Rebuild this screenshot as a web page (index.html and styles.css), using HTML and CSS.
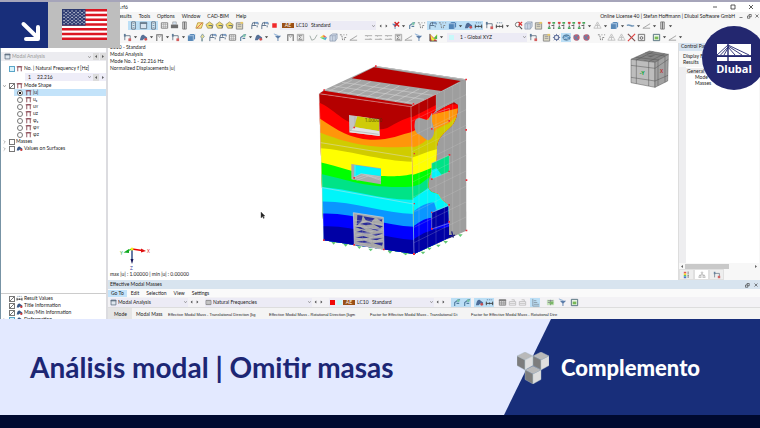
FILE: index.html
```html
<!DOCTYPE html>
<html lang="es">
<head>
<meta charset="utf-8">
<title>Análisis modal | Omitir masas</title>
<link rel="stylesheet" href="styles.css">
</head>
<body>
<svg class="sprite" aria-hidden="true">
  <symbol id="panel" viewBox="0 0 10 10"><path d="M3 1h4v8H3z" fill="#fff" stroke="#456" stroke-width="1"/><path d="M4 3h2M4 5h2M4 7h2" stroke="#58a"/></symbol>
  <symbol id="win" viewBox="0 0 10 10"><path d="M1.500 1.500h7v7h-7z" fill="#dde6ee" stroke="#567"/><path d="M1 2.500h8" stroke="#567" stroke-width="1.500"/></symbol>
  <symbol id="grid" viewBox="0 0 10 10"><path d="M1.500 2h7v6h-7z" fill="#f4f4f4" stroke="#666"/><path d="M2 4h6M2 6h6M4 2v6M6 2v6" stroke="#888" stroke-width=".6"/></symbol>
  <symbol id="print" viewBox="0 0 10 10"><path d="M1 4h8v4H1z" fill="#555"/><path d="M3 1h4v3H3z" fill="#cde" stroke="#777" stroke-width=".6"/></symbol>
  <symbol id="book" viewBox="0 0 10 10"><path d="M3 1h4v8H3z" fill="#ccc" stroke="#555" stroke-width=".8"/><path d="M5 1v8" stroke="#555"/></symbol>
  <symbol id="plane" viewBox="0 0 10 10"><path d="M1 8l2-6h6L7 8z" fill="#f7e47a" stroke="#b88a20"/><path d="M2 8l6-6" stroke="#d33" stroke-width=".9"/></symbol>
  <symbol id="disc" viewBox="0 0 10 10"><path d="M1 4l4-3 4 3-1 4H3z" fill="#efd95a" stroke="#8a7a40" stroke-width=".8"/><path d="M4 5h4v3" fill="none" stroke="#456"/></symbol>
  <symbol id="load" viewBox="0 0 10 10"><path d="M2 9V5h5M2 5l1-3h6v2M5 1v3M8 5v2" fill="none" stroke="#4d6480" stroke-width="1.100"/><path d="M6 1h3v2H6z" fill="#5f8bc0"/></symbol>
  <symbol id="red" viewBox="0 0 10 10"><path d="M2.500 2.500h5v5h-5z" fill="#f00808"/></symbol>
  <symbol id="filterx" viewBox="0 0 10 10"><path d="M1 3h7L5 6v3H4V6z" fill="#4b79ad"/><path d="M4 1l5 5M9 1L4 6" stroke="#c00" stroke-width="1.500"/></symbol>
  <symbol id="filter" viewBox="0 0 10 10"><path d="M2 3h7L6 6v3H5V6z" fill="#41699c"/><path d="M1 1l5 2" stroke="#79a3d0"/></symbol>
  <symbol id="hook" viewBox="0 0 10 10"><path d="M3 9V5l4-3h2M5 6h3" fill="none" stroke="#3e6c92" stroke-width="1.200"/><circle cx="7" cy="3" r="1.500" fill="#6b9"/></symbol>
  <symbol id="xx" viewBox="0 0 10 10"><path d="M1 2h2l1 6M5 2h1M8 2h1M6 8V5h3" fill="none" stroke="#777" stroke-width="1.100" stroke-dasharray="2 1"/></symbol>
  <symbol id="ruler" viewBox="0 0 10 10"><path d="M1 6h8M1.500 4v4M8.500 4v4M5 5v2" stroke="#333" stroke-width="1.100"/><path d="M2 2h6" stroke="#579" stroke-dasharray="1.500 1"/></symbol>
  <symbol id="blob" viewBox="0 0 10 10"><path d="M1 8c1-5 2-6 4-6l4 3v3L6 6 4 8z" fill="#3b5987"/><circle cx="7.500" cy="7" r="1.500" fill="#c33"/></symbol>
  <symbol id="cube" viewBox="0 0 10 10"><path d="M1 3l3-2h5v5L7 9H1z" fill="#c6d2e3" stroke="#7b8ba4" stroke-width=".8"/><path d="M1 3h6v6M7 3l2-2M4 3v6" fill="none" stroke="#7b8ba4" stroke-width=".6"/></symbol>
  <symbol id="bcube" viewBox="0 0 10 10"><path d="M1 3l3-2h5v5L7 9H1z" fill="#3e76ae"/><path d="M1 3h6v6M7 3l2-2" fill="none" stroke="#b9d4ee" stroke-width=".8"/></symbol>
  <symbol id="zoom" viewBox="0 0 10 10"><circle cx="4" cy="4" r="2.500" fill="#fff" stroke="#555"/><path d="M6 6l3 3" stroke="#333" stroke-width="1.300"/><path d="M5 1l4 4M9 1L5 5" stroke="#d11" stroke-width="1.300"/></symbol>
  <symbol id="axis" viewBox="0 0 10 10"><path d="M2.500 2v7M7.500 4v5" stroke="#333" stroke-width="1.200" stroke-dasharray="2 1"/><path d="M1 1h3v2H1z" fill="#d22"/><path d="M1 7h3v2H1zM6 1h3v2H6z" fill="#2a9a40"/><path d="M5 5h2" stroke="#333"/></symbol>
  <symbol id="line" viewBox="0 0 10 10"><path d="M1 5c3-2 5 2 8 0" fill="none" stroke="#5c86ae" stroke-width="1.600"/></symbol>
  <symbol id="dash" viewBox="0 0 10 10"><path d="M1 3h8M1 7h8M3 3l1 1M6 7l1-1" stroke="#999" stroke-width="1"/></symbol>
  <symbol id="slope" viewBox="0 0 10 10"><path d="M1 8l8-5M1 8h8" stroke="#999" stroke-width="1.100"/></symbol>
  <symbol id="vee" viewBox="0 0 10 10"><path d="M1 3l2 5 3-1 3-5" fill="none" stroke="#9aa6a0" stroke-width="1.100"/></symbol>
  <symbol id="frame" viewBox="0 0 10 10"><path d="M2.500 9V2.500h5V9M1 2.500h8" fill="none" stroke="#833b48" stroke-width="1.200"/></symbol>
  <symbol id="gframe" viewBox="0 0 10 10"><path d="M2 9V2h6v7" fill="none" stroke="#555" stroke-width="1.200"/><path d="M3 2l2 3 2-3" fill="none" stroke="#999"/></symbol>
  <symbol id="sum" viewBox="0 0 10 10"><path d="M1.500 1.500h7v7h-7z" fill="#e6e6e6" stroke="#999"/><path d="M7 3H3l2 2-2 2h4" fill="none" stroke="#555" stroke-width=".8"/></symbol>
  <symbol id="rain" viewBox="0 0 10 10"><path d="M1 5l4-3 1 3z" fill="#f5d020"/><path d="M5 2l4 3H5z" fill="#e43"/><path d="M1 5h4l2 3z" fill="#3c6"/><path d="M5 5h4L7 8z" fill="#29d"/></symbol>
  <symbol id="iso" viewBox="0 0 10 10"><path d="M1 1v8h8z" fill="#d22"/><path d="M1 1l4 5 4-5v2L5 9H3z" fill="#ee2"/><path d="M5 6l4-4v5z" fill="#3a3"/><path d="M1 1v8h8" fill="none" stroke="#333"/></symbol>
  <symbol id="arrows" viewBox="0 0 10 10"><path d="M2 8V3h6v5" fill="none" stroke="#567" stroke-width="1"/><path d="M6 6h3v3H6z" fill="#c44"/><path d="M1 1h2v3H1z" fill="#468"/></symbol>
  <symbol id="bulb" viewBox="0 0 10 10"><path d="M4 6v3h1V6l2-2-2-3-2 3z" fill="#e7d884" stroke="#689" stroke-width=".9"/></symbol>
  <symbol id="gear" viewBox="0 0 10 10"><circle cx="5" cy="5" r="2.500" fill="#e5e8f2" stroke="#4d5f90" stroke-width="1.300"/><path d="M5 1v2M5 7v2M1 5h2M7 5h2M2 2l1 1M8 2L7 3M2 8l1-1M8 8L7 7" stroke="#4d5f90"/></symbol>
  <symbol id="note" viewBox="0 0 10 10"><path d="M1.500 2h7v7h-7z" fill="#d8d3bb" stroke="#777"/><path d="M3 4h4M3 6h4" stroke="#888"/><path d="M6 1h3v2H6z" fill="#e6c050"/></symbol>
  <symbol id="ball" viewBox="0 0 10 10"><ellipse cx="5" cy="5" rx="4" ry="3" fill="#5390bf" stroke="#34546f" stroke-width=".8"/><path d="M1 7l8-4M2 4l6 4" stroke="#d0e2f0" stroke-width=".7"/></symbol>
  <symbol id="rball" viewBox="0 0 10 10"><circle cx="5" cy="5" r="3.500" fill="#b84458"/><path d="M2 3l5 5M7 2L3 7" stroke="#456ea0" stroke-width="1.300"/></symbol>
  <symbol id="ghost" viewBox="0 0 10 10"><path d="M5 1L1 8h8zM3 5h4M5 3v5" fill="none" stroke="#b8b8b8" stroke-width="1"/></symbol>
  <symbol id="cross" viewBox="0 0 10 10"><path d="M1 1l8 8" stroke="#633" stroke-width="1.300"/><path d="M9 1L1 9" stroke="#d22" stroke-width="1.300"/></symbol>
  <symbol id="cam" viewBox="0 0 10 10"><path d="M1.500 1.500h7v7h-7z" fill="#eee" stroke="#555"/><circle cx="5" cy="5.500" r="1.500" fill="none" stroke="#444"/></symbol>
  <symbol id="gwin" viewBox="0 0 10 10"><path d="M1.500 1.500h7v7h-7z" fill="#e8f5e0" stroke="#356"/><path d="M3 4h4v3H3z" fill="#62b03c"/></symbol>
  <symbol id="report" viewBox="0 0 10 10"><path d="M1 2h8v6H1z" fill="#bfe0b2"/><path d="M2 3h6M2 5h6M5 2v6" stroke="#667" stroke-width=".8"/><path d="M4 4h4v3H4z" fill="#67ab50"/></symbol>
  <symbol id="table" viewBox="0 0 10 10"><path d="M1.500 2h7v6h-7z" fill="#ccc" stroke="#777"/><path d="M1 2.500h8" stroke="#666" stroke-width="1.500"/><path d="M1 5.500h8M4 3v5M6.500 3v5" stroke="#777" stroke-width=".7"/></symbol>
  <symbol id="gtable" viewBox="0 0 10 10"><path d="M1.500 4h7v4h-7zM4 2h3v2" fill="none" stroke="#b8b8b8"/><path d="M2 6h6" stroke="#bbb"/></symbol>
  <symbol id="bars" viewBox="0 0 10 10"><path d="M2 1v8h7M3 3h3M3 5h4M3 7h6" fill="none" stroke="#82919d" stroke-width="1"/></symbol>
  <symbol id="scale" viewBox="0 0 10 10"><path d="M1 1h3v2H1z" fill="#d33"/><path d="M1 3h3v2H1z" fill="#fc0"/><path d="M1 5h3v2H1z" fill="#3b5"/><path d="M1 7h3v2H1z" fill="#25c"/><path d="M6.500 1v8" stroke="#555" stroke-dasharray="1 1" stroke-width="2"/></symbol>
  <symbol id="bal" viewBox="0 0 10 10"><path d="M5 2v3M2 5h6M2 5L1 8h3L3 5M7 5L6 8h3L8 5" fill="none" stroke="#888" stroke-width=".8"/><circle cx="5" cy="2" r="1" fill="none" stroke="#888" stroke-width=".6"/></symbol>
  <symbol id="caret" viewBox="0 0 6 10"><path d="M1 4h4L3 6.500z" fill="#222"/></symbol>
  <symbol id="left" viewBox="0 0 6 10"><path d="M4 3v4L2 5z" fill="#222"/></symbol>
  <symbol id="right" viewBox="0 0 6 10"><path d="M2 3v4l2-2z" fill="#222"/></symbol>
  <symbol id="chev" viewBox="0 0 6 10"><path d="M1.500 4L3 6l1.500-2" fill="none" stroke="#777" stroke-width=".8"/></symbol>
  <symbol id="chevr" viewBox="0 0 6 10"><path d="M2 3l2 2-2 2" fill="none" stroke="#888" stroke-width=".8"/></symbol>
</svg>

<main class="app">
  <header class="chrome">
    <div class="titlebar"><span class="file">is.rf6</span>
      <div class="winctl">
        <button aria-label="Minimize"><svg viewBox="0 0 8 8"><path d="M2 4h4"/></svg></button>
        <button aria-label="Maximize"><svg viewBox="0 0 8 8"><path d="M2 2h4v4H2z"/></svg></button>
        <button aria-label="Close"><svg viewBox="0 0 8 8"><path d="M2 2l4 4M6 2L2 6"/></svg></button>
      </div>
    </div>
    <nav class="menubar">
      <button>Results</button><button>Tools</button><button>Options</button><button>Window</button><button>CAD-BIM</button><button>Help</button>
      <span class="license">Online License 40 | Stefan Hoffmann | Dlubal Software GmbH</span>
      <div class="subctl">
        <button aria-label="Minimize view"><svg viewBox="0 0 8 8"><path d="M2 6h4"/></svg></button>
        <button aria-label="Restore view"><svg viewBox="0 0 8 8"><path d="M2 4h3v3H2zM4 4V2h3v3H5"/></svg></button>
        <button aria-label="Close view"><svg viewBox="0 0 8 8"><path d="M2 2l4 4M6 2L2 6"/></svg></button>
      </div>
    </nav>
    <div class="toolbar first">
      <div class="group" data-icons="panel* win* panel*"></div>
      <div class="group" data-icons="grid print book"></div>
      <div class="group wider" data-icons="plane disc disc disc note"></div>
      <div class="group wider" data-icons="load load red"></div>
      <div class="combo case"><span class="tag">AE</span><label class="num" for="lc">LC10</label><select id="lc"><option>Standard</option></select><svg><use href="#chev"/></svg></div>
      <div class="group" data-icons="left right"></div>
      <div class="group" data-icons="filterx caret hook xx"></div>
      <div class="group" data-icons="load* xx* bcube* caret* blob* ruler*"></div>
      <div class="group" data-icons="arrows ruler caret"></div>
      <div class="group wide" data-icons="zoom cube note"></div>
      <div class="group wide" data-icons="axis axis axis axis caret ghost caret"></div>
      <div class="group" data-icons="bcube caret line caret slope caret book caret"></div>
    </div>
    <div class="toolbar second">
      <div class="group" data-icons="arrows caret blob caret gframe caret arrows caret bcube"></div>
      <div class="group" data-icons="bulb load load grid hook caret blob caret"></div>
      <div class="group wide" data-icons="filter"></div>
      <div class="group wide" data-icons="gframe sum"></div>
      <div class="group wide" data-icons="vee rain cube xx slope"></div>
      <div class="group wider" data-icons="dash dash dash sum slope filter"></div>
      <div class="group wider" data-icons="iso caret"></div>
      <div class="combo system"><span class="swatch"></span><select aria-label="Coordinate system"><option>1 - Global XYZ</option></select><svg><use href="#chev"/></svg></div>
      <div class="group" data-icons="arrows"></div>
      <div class="group wide" data-icons="note gear ball* rball rball"></div>
      <div class="group wider" data-icons="xx ghost ghost cross cam"></div>
      <div class="group wider" data-icons="gwin caret slope caret"></div>
    </div>
  </header>

  <div class="workspace">
    <aside class="navigator">
      <div class="navhead"><svg class="ic"><use href="#win"/></svg><select aria-label="Analysis type"><option>Modal Analysis</option></select><svg class="sm"><use href="#chev"/></svg><button aria-label="Previous"><svg><use href="#left"/></svg></button><button aria-label="Next"><svg><use href="#right"/></svg></button></div>
      <div class="tree">
        <label class="row"><i></i><input class="cyan" type="checkbox"><svg class="ic"><use href="#frame"/></svg>No. | Natural Frequency f [Hz]</label>
        <div class="row freq"><span>1</span><select aria-label="Frequency"><option>22.216</option></select><svg class="sm"><use href="#chev"/></svg><button aria-label="Previous mode"><svg><use href="#left"/></svg></button><button aria-label="Next mode"><svg><use href="#right"/></svg></button></div>
        <label class="row"><i><svg class="sm"><use href="#chev"/></svg></i><input type="checkbox" checked><svg class="ic"><use href="#frame"/></svg>Mode Shape</label>
        <label class="row leaf on"><input type="radio" name="shape" checked><svg class="ic"><use href="#frame"/></svg>|u|</label>
        <label class="row leaf"><input type="radio" name="shape"><svg class="ic"><use href="#frame"/></svg>uₓ</label>
        <label class="row leaf"><input type="radio" name="shape"><svg class="ic"><use href="#frame"/></svg>uʏ</label>
        <label class="row leaf"><input type="radio" name="shape"><svg class="ic"><use href="#frame"/></svg>uᴢ</label>
        <label class="row leaf"><input type="radio" name="shape"><svg class="ic"><use href="#frame"/></svg>φₓ</label>
        <label class="row leaf"><input type="radio" name="shape"><svg class="ic"><use href="#frame"/></svg>φʏ</label>
        <label class="row leaf"><input type="radio" name="shape"><svg class="ic"><use href="#frame"/></svg>φᴢ</label>
        <label class="row"><i><svg class="sm"><use href="#chevr"/></svg></i><input type="checkbox">Masses</label>
        <label class="row"><i><svg class="sm"><use href="#chevr"/></svg></i><input type="checkbox"><svg class="ic"><use href="#blob"/></svg>Values on Surfaces</label>
      </div>
      <div class="tree lower">
        <label class="row"><i></i><input type="checkbox" checked><svg class="ic"><use href="#ruler"/></svg>Result Values</label>
        <label class="row"><i></i><input type="checkbox" checked><svg class="ic"><use href="#blob"/></svg>Title Information</label>
        <label class="row"><i></i><input type="checkbox" checked><svg class="ic"><use href="#blob"/></svg>Max/Min Information</label>
        <label class="row"><i><svg class="sm"><use href="#chevr"/></svg></i><input class="cyan" type="checkbox"><svg class="ic"><use href="#blob"/></svg>Deformation</label>
      </div>
    </aside>

    <section class="center">
      <div class="upper">
        <div class="viewport">
          <svg class="scene" viewBox="108 43 570 237" role="img" aria-label="Building model">
            <defs>
              <clipPath id="front"><path d="M57 116L333 155L342 597L71 556Z"/></clipPath>
              <clipPath id="side"><path d="M332 155L408 118V165L398 178L430 158L462 142L474 150C474 190 460 210 445 222C425 240 412 255 411 275L408 330C400 345 382 360 385 400C395 420 415 410 420 425C430 445 445 440 447 458V540L465 540L342 597Z"/></clipPath>
              <clipPath id="whole"><path d="M332 155L498 73L499 527L342 597Z"/></clipPath>
            </defs>
            <g transform="translate(300 55) scale(.33333)">
              <path d="M57 116L72 105L226 33L498 73L335 155Z" fill="#a5a5a5"/>
              <path d="M226 33L498 73L484 84L222 41Z" fill="#9a9a9a"/>
              <path d="M76 103L345 146M100 93L372 133M126 82L398 121M85 109L155 76M113 114L183 76M141 118L212 80M170 123L241 85M198 127L270 89M227 132L298 93M256 136L328 98M284 141L357 102M312 146L386 106" fill="none" stroke="#d9d9d9" stroke-width="1.500"/>
              <path d="M155 70L222 37L482 78L424 108Z" fill="#b40000"/>
              <path d="M226 34L498 74" stroke="#ccc" stroke-width="2"/>
              <path d="M332 155L498 73L499 527L342 597Z" fill="#9e9e9e"/>
              <g clip-path="url(#side)">
                <path d="M330 110H480V600H330Z" fill="#b40000"/>
                <path d="M330 190L408 150L474 148V600H330Z" fill="#f00"/>
                <path d="M330 232C360 225 380 190 400 178L474 160V600H330Z" fill="#ff960a"/>
                <path d="M330 278C370 275 400 235 410 222L447 205L474 180V600H330Z" fill="#d0cc00"/>
                <path d="M330 310C360 300 390 285 430 278V600H330Z" fill="#ff0"/>
                <path d="M330 362C355 355 380 345 410 332V600H330Z" fill="#0f0"/>
                <path d="M330 397L360 388L390 365L410 360V600H330Z" fill="#00e387"/>
                <path d="M330 435C350 425 370 410 395 390L450 390V600H330Z" fill="#00f5fa"/>
                <path d="M330 480C350 460 370 445 402 442L410 465L450 480V600H330Z" fill="#0a96ff"/>
                <path d="M330 520C355 505 370 488 400 488L450 490V600H330Z" fill="#00f"/>
                <path d="M330 560C355 545 370 525 450 515L470 520V600H330Z" fill="#0000a5"/>
              </g>
              <path d="M345 198C355 180 370 195 385 195L396 172V200C408 230 402 250 385 256C370 250 368 242 352 236C340 222 344 208 345 198Z" fill="#9e9e9e"/>
              <path d="M395 325L448 300V350L395 372Z" fill="#00e387"/><path d="M395 345L410 340L425 360L395 372Z" fill="#00f5fa"/>
              <path d="M395 473L445 453L447 500L395 522Z" fill="#0000a5"/>
              <path d="M395 178L448 160V198L395 222ZM395 325L448 300V350L395 372ZM395 473L447 450V505L395 522Z" fill="none" stroke="#c5c5c5" stroke-width="1.500"/>
              <g clip-path="url(#whole)" fill="none" stroke="#ddd" stroke-opacity=".45" stroke-width="1.300">
                <path d="M357 110V610M383 110V610M408 110V610M433 80V610M458 80V610M480 70V610"/>
                <path d="M330 201L500 118M330 247L500 163M330 293L500 210M330 339L500 255M330 385L500 300M330 431L500 347M330 477L500 393M330 523L500 440M330 569L500 485"/>
              </g>
              <g clip-path="url(#front)">
                <path d="M50 100H350V600H50Z" fill="#b40000"/>
                <path d="M50 140C95 155 130 205 185 215C220 224 245 226 262 219C290 204 305 193 345 182V600H50Z" fill="#f00"/>
                <path d="M50 184C110 225 150 250 210 254C260 258 300 240 345 228V600H50Z" fill="#ff960a"/>
                <path d="M50 229C120 255 200 286 345 274V600H50Z" fill="#d0cc00"/>
                <path d="M50 280C130 280 250 322 345 320V600H50Z" fill="#ff0"/>
                <path d="M50 320C110 331 180 362 240 363S310 365 345 355V600H50Z" fill="#0f0"/>
                <path d="M50 355C130 368 200 405 345 394V600H50Z" fill="#00e387"/>
                <path d="M50 395C150 400 250 438 345 434V600H50Z" fill="#00f5fa"/>
                <path d="M50 440C150 434 250 475 345 477V600H50Z" fill="#0a96ff"/>
                <path d="M50 477C150 467 250 514 345 515V600H50Z" fill="#00f"/>
                <path d="M50 516C150 504 250 553 345 555V600H50Z" fill="#0000a5"/>
              </g>
              <path d="M57 116L72 107L338 149L333 157Z" fill="#c00000"/>
              <path d="M57 116L333 155L342 597M57 116L71 556M62 263L335 307M67 398L340 447M333 155L408 118" fill="none" stroke="#dedede" stroke-opacity=".7" stroke-width="2"/>
              <path d="M147 180L238 193L239 243L148 232Z" fill="#c4c4c4"/><path d="M172 184L237 194V228L162 216Z" fill="#cfcb08"/><path d="M148 232L163 216L238 229L239 243Z" fill="#e3e3e3"/><path d="M165 184V218M148 226L236 238" stroke="#aaa" stroke-width="2"/>
              <text x="194" y="201" font-size="14" fill="#443c00">1.00000</text>
              <path d="M154 327L243 340V388L154 373Z" fill="#aaa"/><path d="M163 330L243 342V363L184 356L162 367Z" fill="#00f5fa"/><path d="M156 370L183 356L242 366M158 373L195 360L242 371M170 376L205 363L243 376M165 330V367" stroke="#d2d2d2" stroke-width="1.500" fill="none"/>
              <path d="M160 473L250 487L252 584L163 568Z" fill="#a8a8a8"/>
              <path d="M172 480L188 482L184 500L170 512ZM190 484L224 490L214 501L197 495ZM232 491L247 492L245 500ZM180 507L205 500L218 508L198 511ZM220 508L249 514L240 519ZM166 516L181 516L197 524L180 521ZM203 518L221 522L246 521L230 528ZM168 531L185 526L213 535L195 536ZM214 538L249 535L229 543ZM165 548L190 543L209 549L185 550ZM211 552L247 549L230 556ZM169 560L193 557L214 565L195 564ZM220 565L249 562L246 572Z" fill="#151696" opacity=".85"/>
              <path d="M163 495L250 510M164 511L250 526M164 530L251 544M164 548L251 562M166 506L247 492M166 541L249 521M169 557L249 540M180 567L250 553" stroke="#c4c4c4" stroke-width="1.500"/>
              <path d="M222 490V535L215 575M204 493V570M188 505V565" stroke="#999" fill="none" stroke-width="1"/>
              <path d="M160 473L250 487L252 584L163 568Z" fill="none" stroke="#d3d3d3" stroke-width="2"/>
              <g fill="#62c872"><path d="M94 561h14l-7 8zM130 567h14l-7 8zM171 574h14l-7 8zM205 581h14l-7 8zM263 588h14l-7 8zM308 594h17l-8 7zM362 590h14l-7 8zM381 578h14l-7 8zM408 569h14l-7 8zM430 558h14l-7 8zM474 538h14l-7 8z"/></g>
              <path d="M465 540L447 548M455 529L460 548" stroke="#202080" stroke-width="4"/>
              <g fill="#f02c38"><path d="M70 103h5v5h-5zM225 31h5v5h-5zM496 71h5v5h-5zM338 144h5v5h-5zM496 222h5v5h-5zM497 373h5v5h-5zM497 524h5v5h-5zM339 594h6v6h-6zM69 553h5v5h-5zM160 215h5v5h-5zM160 366h5v5h-5zM160 567h5v5h-5zM249 581h5v5h-5zM341 294h4v4h-4zM341 444h4v4h-4zM393 219h5v5h-5zM445 195h5v5h-5zM446 297h5v5h-5zM445 347h4v4h-4zM393 370h5v5h-5zM445 447h5v5h-5zM445 498h5v5h-5zM393 519h5v5h-5zM393 470h4v4h-4z"/></g>
            </g>
            <g stroke-width="1.300">
              <path d="M132 249L142 250.500" stroke="#e00"/><path d="M141 248.500L146 251L141 252.500Z" fill="#d11"/>
              <path d="M132 249L127 251" stroke="#1b1"/><path d="M129 249L123.500 252.500L129 253Z" fill="#1a2"/>
              <path d="M132 249V260" stroke="#137"/><path d="M130.500 259H133.500L132 264Z" fill="#115"/>
              <circle cx="132" cy="249" r="1.500" fill="#ee2"/>
              <text x="147" y="253" font-size="5" fill="#d11">X</text><text x="120" y="255" font-size="5" fill="#1a2">Y</text><text x="130" y="270" font-size="5" fill="#339">Z</text>
            </g>
            <path d="M261 212v6l1.500-1.500 1 2 .8-.4-.9-2h1.600z" fill="#222" stroke="#555" stroke-width=".4"/>
            <g transform="translate(600 0) scale(.33333)" stroke="#555" stroke-width="1.500">
              <path d="M93 178L148 153L205 163L165 187Z" fill="#858585"/><path d="M93 178L165 187V262L93 248Z" fill="#bdbdbd"/><path d="M165 187L205 163L203 243L165 262Z" fill="#a2a2a2"/>
              <path d="M109 180V251M146 185V258M93 196L165 205L205 178M93 232L165 243L204 226M174 182V257M195 169V247M107 172L177 180M136 158L195 168M109 180L160 155M146 185L194 161" fill="none"/>
              <path d="M140 167L166 166L152 172Z" fill="#666" stroke="none"/>
              <text x="119" y="225" font-size="16" font-weight="bold" fill="#12a83c" stroke="none">-Y</text><text x="180" y="220" font-size="14" font-weight="bold" fill="#b33" stroke="none">X</text>
            </g>
          </svg>
          <div class="info">2010 - Standard<br>Modal Analysis<br>Mode No. 1 - 22.216 Hz<br>Normalized Displacements |u|</div>
          <div class="range">max |u| : 1.00000 | min |u| : 0.00000</div>
        </div>
        <aside class="control">
          <h2>Control Panel</h2>
          <p>Display Factors<br>Results</p>
          <ul class="factors"><li class="head">General</li><li>Mode</li><li>Masses</li></ul>
          <div class="scroll"><svg><use href="#left"/></svg><span></span><svg><use href="#right"/></svg></div>
          <div class="tabs"><button aria-label="Colors"><svg><use href="#scale"/></svg></button><button class="on" aria-label="Factors"><svg><use href="#bal"/></svg></button><button aria-label="Filter"><svg><use href="#arrows"/></svg></button></div>
        </aside>
      </div>
      <section class="masses">
        <div class="mtitle"><h2>Effective Modal Masses</h2>
          <button aria-label="Restore"><svg viewBox="0 0 8 8"><path d="M2 4h3v3H2zM4 4V2h3v3H5"/></svg></button><button aria-label="Close panel"><svg viewBox="0 0 8 8"><path d="M2 2l4 4M6 2L2 6"/></svg></button></div>
        <nav class="mmenu"><button class="on">Go To</button><button>Edit</button><button>Selection</button><button>View</button><button>Settings</button></nav>
        <div class="mtools">
          <div class="combo kind"><svg class="ic"><use href="#win"/></svg><select aria-label="Table kind"><option>Modal Analysis</option></select><svg><use href="#chev"/></svg></div>
          <div class="group" data-icons="left right"></div>
          <div class="combo result"><svg class="ic"><use href="#grid"/></svg><select aria-label="Table result"><option>Natural Frequencies</option></select><svg><use href="#chev"/></svg></div>
          <div class="group" data-icons="left right"></div>
          <div class="combo mcase"><span class="swatch redsw"></span><span class="swatch"></span><span class="tag">AE</span><label class="num" for="lc2">LC10</label><select id="lc2"><option>Standard</option></select><svg><use href="#chev"/></svg></div>
          <div class="group" data-icons="left right"></div>
          <div class="group wider" data-icons="hook* hook*"></div>
          <div class="group wide" data-icons="blob* ruler*"></div>
          <div class="group wide" data-icons="table gtable gtable"></div>
          <div class="group wide" data-icons="bars*"></div>
          <div class="group spread" data-icons="report filter gwin"></div>
        </div>
        <table><thead><tr><th class="c1">Mode</th><th class="c2">Modal Mass</th><th>Effective Modal Mass - Translational Direction [kg</th><th>Effective Modal Mass - Rotational Direction [kgm</th><th>Factor for Effective Modal Mass - Translational Di</th><th>Factor for Effective Modal Mass - Rotational Dire</th><th class="rest"></th></tr></thead></table>
      </section>
    </section>
  </div>

  <div class="badges">
    <div class="arrow"><svg viewBox="0 0 48 48"><path d="M23.500 24L38 38M38 27V39H26"/></svg></div>
    <div class="flagbox"><svg class="flag" viewBox="0 0 45 31"><path d="M0 0H45V31H0Z" fill="#fff"/><path d="M0 1.200H45M0 6H45M0 10.700H45M0 15.500H45M0 20.300H45M0 25H45M0 29.800H45" stroke="#dc1622" stroke-width="2.400"/><path d="M0 0H23.500V16.700H0Z" fill="#2d3a70"/><path d="M1.500 2H23M1.500 5.200H23M1.500 8.400H23M1.500 11.600H23M1.500 14.800H23M3.500 3.600H21M3.500 6.800H21M3.500 10H21M3.500 13.200H21" stroke="#fff" stroke-width="1.100" stroke-dasharray="1.100 2.900"/></svg></div>
  </div>
  <div class="dlubal">
    <svg viewBox="0 0 34 17"><path d="M0 0H34V11.500H0Z" fill="#fff"/><path d="M0 11L11 1M3.500 11L11 3M7 11L11 4M11 1L32 11M11 2L25 11M11 3L18 11" stroke="#23276f" stroke-width=".9" fill="none"/><path d="M0 13H34V17H0Z" fill="#fff"/><path d="M0 11.300H34V12.800H0ZM10.300 0H11.700V17H10.300Z" fill="#23276f"/></svg>
    <strong>Dlubal</strong>
  </div>
</main>

<section class="banner">
  <h1>Análisis modal | Omitir masas</h1>
  <div class="addon"><span>Complemento</span></div>
  <svg class="cubes" viewBox="0 0 32 32"><g id="c" stroke="#a9bcc4" stroke-width=".4"><path d="M0 4L8 0L16 4L8 8Z" fill="#b9b9b9"/><path d="M0 4L8 8V18L0 13.500Z" fill="#7d7d7d"/><path d="M16 4L8 8V18L16 13.500Z" fill="#dedede"/></g><use href="#c" x="16"/><use href="#c" x="8" y="14"/></svg>
</section>
<footer class="base"></footer>
<script src="toolbar.js"></script>
</body>
</html>
```

FILE: styles.css
```css
* { box-sizing: border-box; }
body { margin: 0; height: 100vh; display: grid; grid-template-rows: minmax(0, 1fr) 96px 13px; font-family: Lato, sans-serif; background: #000a30; overflow: hidden; }
button, select, input { font: inherit; color: inherit; margin: 0; padding: 0; border: 0; background: none; border-radius: 0; }
select { appearance: none; flex: 1; min-width: 0; }
h1, h2, p, ul { margin: 0; padding: 0; font-weight: inherit; font-size: inherit; }
ul { list-style: none; }
svg { display: block; flex: none; }
.sprite { position: absolute; width: 0; height: 0; }
.app { position: relative; display: flex; flex-direction: column; overflow: hidden; background: #fff; font-size: 5px; line-height: 7px; color: #222; border-top: 2px solid #a6a5ba; }

.titlebar { height: 10px; display: flex; align-items: center; padding-left: 117px; }
.winctl { margin-left: auto; display: flex; gap: 10px; padding-right: 5px; }
.winctl svg { width: 8px; height: 8px; }
.winctl path, .subctl path, .mtitle path { fill: none; stroke: #333; stroke-width: 0.8; }
.menubar { height: 8px; display: flex; align-items: center; gap: 7px; padding-left: 116px; background: #f5f5f5; }
.license { margin-left: auto; }
.subctl { display: flex; gap: 2px; margin-left: -4px; }
.subctl svg, .mtitle svg { width: 6px; height: 6px; }
.toolbar { display: flex; align-items: center; background: #f7f7f7; }
.first { height: 11px; padding-left: 128px; }
.second { height: 12px; padding-left: 122px; }
.group { display: flex; margin-right: 1px; }
.group.wide { margin-left: 2px; }
.group.wider { margin-left: 4px; }
.group.spread { margin-left: 4px; gap: 2px; }
.group button { width: 10px; height: 9px; display: flex; align-items: center; justify-content: center; }
.group button.thin { width: 6px; }
.group button.on { background: #bcdff6; }
.group svg { width: 9px; height: 9px; opacity: 0.85; }
.group .thin svg { width: 5px; height: 8px; }
.combo { display: flex; align-items: center; height: 9px; background: #ecebf5; }
.combo svg, .sm { width: 5px; height: 8px; }
.combo .ic, .ic { width: 7px; height: 7px; margin-right: 1px; }
.case { width: 96px; margin-right: 1px; padding-left: 2px; }
.tag { background: #9a4f16; color: #fff; width: 12px; height: 5px; line-height: 5px; text-align: center; margin-right: 2px; }
.num { width: 15px; }
.system { width: 80px; margin: 0 1px 0 2px; }
.swatch { width: 5px; height: 5px; background: #c9f8fa; margin: 0 1px; }
.system .swatch { margin: 0 6px 0 2px; }

.workspace { flex: 1; min-height: 0; display: flex; }
.navigator { width: 108px; border-left: 1px solid #7793a5; border-right: 2px solid #dcdce0; padding-top: 9px; display: flex; flex-direction: column; }
.navhead { display: flex; align-items: center; height: 9px; padding-left: 3px; background: #ececf0; color: #999; margin-bottom: 4px; }
.navhead button, .freq button { width: 6px; height: 7px; background: #dcdcdc; margin-left: 1px; }
.navhead button svg, .freq button svg { width: 6px; height: 7px; }
.row { display: flex; align-items: center; height: 7px; white-space: nowrap; }
.row i { width: 8px; padding-left: 1px; }
.row input { appearance: none; width: 6px; height: 6px; border: 1px solid #777; background: #fff; margin-right: 1px; }
.row input[type=checkbox]:checked { background: linear-gradient(135deg, #fff 45%, #777 45% 60%, #fff 60%); }
.row input.cyan { border-color: #5aa5c8; background: #d9f2fb; }
.row input[type=radio] { border-radius: 50%; }
.row input[type=radio]:checked { background: radial-gradient(#111 40%, #fff 50%); }
.leaf { margin-left: 13px; padding-left: 3px; }
.leaf input { margin-right: 2px; }
.leaf.on { background: #c3e3fa; }
.freq { height: 8px; margin: 0 0 1px 24px; padding-left: 3px; background: #eeedf8; }
.freq span { width: 9px; }
.freq button:last-child { background: none; }
.tree > .row:first-child { margin-bottom: 1px; }
.lower { margin-top: auto; height: 26px; border-top: 1px solid #ccc; overflow: hidden; padding-top: 1px; }
.lower > .row:first-child { margin-bottom: 0; }

.center { flex: 1; min-width: 0; display: flex; flex-direction: column; }
.upper { flex: 1; min-height: 0; display: flex; }
.viewport { flex: 1; position: relative; display: flex; flex-direction: column; justify-content: space-between; padding: 1px 2px 2px; }
.scene { position: absolute; inset: 0; width: 100%; height: 100%; font-family: "Open Sans", sans-serif; }
.info, .range { position: relative; }
.control { width: 82px; display: flex; flex-direction: column; background: #f7f7f7; border-left: 1px solid #ddd; padding-right: 1px; }
.control h2 { height: 8px; background: #d6e3f0; padding-left: 2px; }
.control p { padding: 2px 4px; line-height: 6px; }
.factors { flex: 1; background: #fff; border-left: 7px solid #eeeef0; padding-top: 1px; }
.factors li { padding-left: 9px; line-height: 6px; }
.factors .head { padding-left: 1px; background: #eee; }
.scroll { display: flex; height: 6px; align-items: center; }
.scroll span { width: 44px; height: 5px; background: #c9c9c9; }
.scroll svg { width: 6px; height: 7px; }
.scroll svg:last-child { margin-left: auto; }
.tabs { display: flex; height: 11px; }
.tabs button { width: 15px; display: flex; align-items: center; justify-content: center; background: #eee; border: 1px solid #e0e0e0; }
.tabs .on { background: #fff; }
.tabs svg { width: 8px; height: 8px; opacity: 0.8; }

.masses { height: 39px; background: #f4f4f4; }
.mtitle { display: flex; align-items: center; height: 9px; gap: 3px; padding: 0 1px 0 2px; background: #d8e4ef; }
.mtitle h2 { flex: 1; }
.mmenu { display: flex; height: 8px; align-items: center; gap: 7px; background: #fafafa; }
.mmenu .on { background: #c3e3fa; padding: 0 3px; margin-right: -3px; }
.mtools { display: flex; align-items: center; height: 10px; padding-left: 2px; background: #f3f2f5; }
.kind { width: 78px; }
.result { width: 107px; margin-left: 4px; }
.mcase { width: 105px; margin-left: 4px; }
.redsw { background: #f00808; }
table { width: 100%; table-layout: fixed; border-collapse: collapse; }
th { font: 400 4px/7px "Liberation Sans", sans-serif; width: 101px; padding: 3px 0 2px; text-align: left; white-space: nowrap; border-top: 1px solid #ddd; }
th.c1 { width: 24px; padding-left: 6px; background: #e5e5e5; font: 400 5px/7px Lato, sans-serif; }
th.c2 { width: 36px; padding-left: 4px; font: 400 5px/7px Lato, sans-serif; }
th.rest { width: auto; }

.badges { position: absolute; top: -2px; left: 0; display: flex; height: 50px; }
.arrow { width: 48px; height: 48px; background: #182e7a; }
.arrow path { fill: none; stroke: #fff; stroke-width: 4; stroke-linecap: round; stroke-linejoin: round; }
.flagbox { width: 72px; height: 48px; background: #bebebe; display: flex; padding: 9px 14px; }
.flag { width: 45px; height: 31px; }
.dlubal { position: absolute; top: 24px; right: -6px; width: 64px; height: 64px; border-radius: 50%; background: #23276f; color: #fff; display: flex; flex-direction: column; align-items: center; padding-top: 18px; }
.dlubal svg { width: 34px; height: 17px; }
.dlubal strong { font: 700 11px/16px "Open Sans", sans-serif; }

.banner { position: relative; display: flex; align-items: center; background: #e3e9ff; color: #1c2674; }
.banner h1 { flex: 1; padding-left: 30px; font: 700 28px/36px Lato, sans-serif; white-space: nowrap; }
.addon { width: 256px; align-self: stretch; display: flex; align-items: center; padding-left: 57px; background: #182e7a; clip-path: polygon(47px 0, 100% 0, 100% 100%, 0 100%); color: #fff; font: 900 22px/30px Lato, sans-serif; }
.addon span { padding-top: 2px; }
.cubes { position: absolute; right: 211px; top: 33px; width: 32px; height: 32px; }
```

FILE: toolbar.js
```js
// Fills each toolbar group with icon buttons; a trailing * marks a pressed one.
document.querySelectorAll("[data-icons]").forEach(function (group) {
  group.innerHTML = group.dataset.icons.split(" ").map(function (token) {
    var name = token.replace("*", "");
    var thin = /^(caret|left|right)$/.test(name) ? " thin" : "";
    var on = token.endsWith("*") ? " on" : "";
    return '<button class="tool' + thin + on + '" aria-label="' + name + '"><svg><use href="#' + name + '"/></svg></button>';
  }).join("");
});
```
